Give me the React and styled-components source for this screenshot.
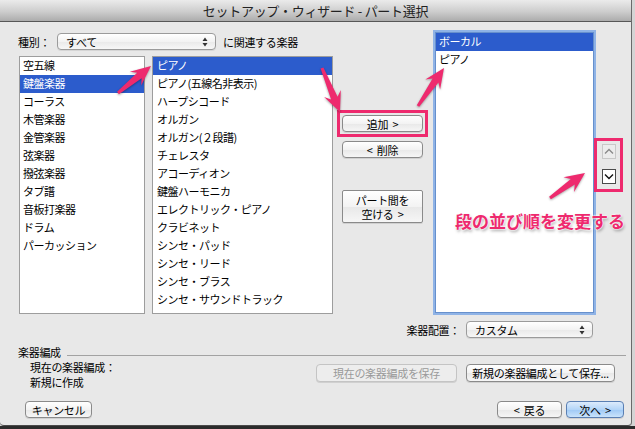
import React from 'react';
import styled, { createGlobalStyle } from 'styled-components';

const PINK = '#ee2a6e';
const FONT = '"Noto Sans CJK JP", "Noto Sans", sans-serif';

const GlobalStyle = createGlobalStyle`
  html, body {
    margin: 0;
    padding: 0;
    min-height: 100%;
    background: linear-gradient(to bottom, #d4d4d4 426px, #2b2b2b 426px);
  }
  body {
    font-family: ${FONT};
    font-size: 11px;
    color: #000;
  }
`;

const Window = styled.div`
  position: relative;
  width: 632px;
  height: 426px;
  box-sizing: border-box;
  background: #e8e8e8;
  border-right: 1px solid #6a6a6a;
  border-bottom: 1px solid #4a4a4a;
  border-radius: 0 0 4px 4px;
  display: flex;
  flex-direction: column;
  overflow: hidden;
`;

const TitleBar = styled.div`
  height: 22px;
  box-sizing: border-box;
  border-bottom: 1px solid #575757;
  background: linear-gradient(#ebebeb, #cdcdcd 55%, #acacac);
  display: flex;
  align-items: center;
  justify-content: center;
  font-size: 13px;
  color: #222;
  letter-spacing: -0.3px;
`;

const MainRow = styled.div`
  display: flex;
  align-items: flex-start;
  padding-top: 8px;
`;

const LeftSection = styled.div`
  margin-left: 18px;
  width: 315px;
  display: flex;
  flex-direction: column;
`;

const FilterRow = styled.div`
  display: flex;
  align-items: center;
  height: 17px;
  margin-top: 3px;
`;

const Label = styled.span`
  white-space: nowrap;
  letter-spacing: -0.3px;
  width: ${(p) => (p.width ? `${p.width}px` : 'auto')};
  margin-left: ${(p) => p.gap || 0}px;
`;

const Popup = styled.div`
  width: ${(p) => p.width}px;
  height: 17px;
  box-sizing: border-box;
  border: 1px solid #9b9b9b;
  border-radius: 4px;
  background: linear-gradient(#ffffff, #f3f3f3 50%, #e9e9e9 51%, #f7f7f7);
  box-shadow: 0 1px 0 rgba(0, 0, 0, 0.08);
  display: flex;
  align-items: center;
  justify-content: space-between;
  padding: 0 7px 0 8px;
  letter-spacing: -0.3px;
`;

const ListsRow = styled.div`
  display: flex;
  gap: 7px;
  margin: 6px 0 0 1px;
  height: 258px;
`;

const ListBox = styled.div`
  width: ${(p) => p.width}px;
  height: 100%;
  box-sizing: border-box;
  background: #fff;
  border: 1px solid #9d9d9d;
  overflow: hidden;
`;

const Row = styled.div`
  height: 18px;
  line-height: 17px;
  padding-left: ${(p) => p.indent || 3}px;
  white-space: nowrap;
  letter-spacing: -0.5px;
  background: ${(p) => (p.selected ? '#2c5ccc' : 'transparent')};
  color: ${(p) => (p.selected ? '#fff' : '#000')};
`;

const ButtonColumn = styled.div`
  margin-left: 9px;
  width: 81px;
  padding-top: 85px;
  display: flex;
  flex-direction: column;
`;

const Button = styled.button`
  width: ${(p) => (p.width ? `${p.width}px` : '100%')};
  height: ${(p) => p.height || 17}px;
  margin-top: ${(p) => p.top || 0}px;
  box-sizing: border-box;
  padding: 0;
  border: 1px solid ${(p) => (p.disabled ? '#c4c4c4' : p.primary ? '#5a7fb3' : '#8a8a8a')};
  border-radius: ${(p) => (p.square ? 2 : 4)}px;
  background: ${(p) =>
    p.disabled
      ? '#ededed'
      : p.primary
      ? 'linear-gradient(#dcebfc, #b3d5f8 50%, #9ec8f5 51%, #c9e3fb)'
      : 'linear-gradient(#ffffff, #f3f3f3 50%, #e8e8e8 51%, #f6f6f6)'};
  box-shadow: 0 1px 0 rgba(0, 0, 0, 0.1);
  font-family: ${FONT};
  font-size: 11px;
  line-height: 14px;
  letter-spacing: -0.3px;
  word-spacing: 2px;
  color: ${(p) => (p.disabled ? '#9a9a9a' : '#000')};
  white-space: pre-line;
`;

const Highlighted = styled.div`
  outline: 3px solid ${PINK};
  outline-offset: 2px;
`;

const RightList = styled.div`
  margin-left: 10px;
  width: 163px;
  height: 285px;
  box-sizing: border-box;
  background: #fff;
  border: 2px solid #8fb3e6;
  box-shadow: inset 0 0 0 1px #6790cc;
  padding: 1px;
  overflow: hidden;
`;

const OrderBox = styled.div`
  margin: 111px 0 0 1px;
  width: 23px;
  box-sizing: border-box;
  padding: 3px 4px 5px 5px;
  outline: 3px solid ${PINK};
  display: flex;
  flex-direction: column;
  gap: 10px;
`;

const OrderButton = styled.div`
  width: 14px;
  height: 15px;
  box-sizing: border-box;
  border: 1px solid ${(p) => (p.disabled ? '#c8c8c8' : '#4a4a4a')};
  background: ${(p) => (p.disabled ? '#ececec' : '#fff')};
  display: flex;
  align-items: center;
  justify-content: center;
`;

const PlacementRow = styled.div`
  display: flex;
  justify-content: flex-end;
  align-items: center;
  gap: 6px;
  margin-top: 6px;
  padding-right: 38px;
`;

const GroupHeader = styled.div`
  display: flex;
  align-items: center;
  height: 14px;
  margin-top: 7px;
  padding: 0 5px 0 18px;
`;

const GroupLine = styled.div`
  flex: 1;
  height: 1px;
  margin: 6px 0 0 6px;
  background: #a2a2a2;
`;

const GroupBody = styled.div`
  display: flex;
  align-items: flex-start;
  margin-top: 1px;
  padding: 0 16px 0 30px;
`;

const InfoLine = styled.div`
  height: 15px;
  line-height: 15px;
  letter-spacing: -0.3px;
  white-space: nowrap;
`;

const ButtonGroup = styled.div`
  display: flex;
  gap: ${(p) => p.gap || 9}px;
  margin-left: auto;
  margin-top: ${(p) => p.top || 0}px;
`;

const BottomRow = styled.div`
  display: flex;
  align-items: center;
  margin-top: 11px;
  padding: 0 7px 0 25px;
`;

const Overlay = styled.svg`
  position: absolute;
  left: 0;
  top: 0;
  pointer-events: none;
  filter: drop-shadow(0 1px 1px rgba(0, 0, 0, 0.35));
`;

const Note = styled.div`
  position: absolute;
  left: 455px;
  top: 208px;
  font-size: 17px;
  font-weight: 700;
  color: ${PINK};
  white-space: nowrap;
  text-shadow: 0 0 1px #fff, 0 0 2px #fff, 0 0 2px #fff, 1px 2px 3px rgba(0, 0, 0, 0.35);
`;

const categories = [
  '空五線', '鍵盤楽器', 'コーラス', '木管楽器', '金管楽器', '弦楽器',
  '撥弦楽器', 'タブ譜', '音板打楽器', 'ドラム', 'パーカッション',
];

const instruments = [
  'ピアノ', 'ピアノ(五線名非表示)', 'ハープシコード', 'オルガン', 'オルガン(２段譜)',
  'チェレスタ', 'アコーディオン', '鍵盤ハーモニカ', 'エレクトリック・ピアノ', 'クラビネット',
  'シンセ・パッド', 'シンセ・リード', 'シンセ・ブラス', 'シンセ・サウンドトラック', 'SFX',
];

const arrows = [
  [118, 93, 151, 66],
  [322, 68, 340, 112],
  [418, 106, 444, 68],
  [550, 198, 585, 173],
];

const arrowPoints = ([x1, y1, x2, y2]) => {
  const len = Math.hypot(x2 - x1, y2 - y1);
  const ux = (x2 - x1) / len;
  const uy = (y2 - y1) / len;
  const nx = -uy;
  const ny = ux;
  const headLen = 17;
  const bx = x2 - ux * headLen;
  const by = y2 - uy * headLen;
  const pt = (x, y, w) => `${(x + nx * w).toFixed(1)},${(y + ny * w).toFixed(1)}`;
  return [
    pt(x1, y1, 1.5),
    pt(bx + ux * 2, by + uy * 2, 3.5),
    pt(bx - ux * 3, by - uy * 3, 9),
    `${x2},${y2}`,
    pt(bx - ux * 3, by - uy * 3, -9),
    pt(bx + ux * 2, by + uy * 2, -3.5),
    pt(x1, y1, -1.5),
  ].join(' ');
};

const UpDown = () => (
  <svg width="6" height="10" viewBox="0 0 6 10">
    <path d="M3 0.5 L5.5 4 H0.5 Z M3 9.5 L5.5 6 H0.5 Z" fill="#333" />
  </svg>
);

const Chevron = ({ up, color }) => (
  <svg width="10" height="7" viewBox="0 0 10 7">
    <polyline
      points={up ? '1,5.5 5,1.5 9,5.5' : '1,1.5 5,5.5 9,1.5'}
      fill="none"
      stroke={color}
      strokeWidth="1.4"
    />
  </svg>
);

const App = () => {
  return (
    <>
      <GlobalStyle />
      <Window>
        <TitleBar>セットアップ・ウィザード - パート選択</TitleBar>
        <MainRow>
          <LeftSection>
            <FilterRow>
              <Label width={39}>種別：</Label>
              <Popup width={159}>
                <span>すべて</span>
                <UpDown />
              </Popup>
              <Label gap={7}>に関連する楽器</Label>
            </FilterRow>
            <ListsRow>
              <ListBox width={126}>
                {categories.map((name) => (
                  <Row key={name} selected={name === '鍵盤楽器'}>
                    {name}
                  </Row>
                ))}
              </ListBox>
              <ListBox width={181}>
                {instruments.map((name, i) => (
                  <Row key={name} indent={4} selected={i === 0}>
                    {name}
                  </Row>
                ))}
              </ListBox>
            </ListsRow>
          </LeftSection>
          <ButtonColumn>
            <Highlighted>
              <Button>追加 &gt;</Button>
            </Highlighted>
            <Button top={9}>&lt; 削除</Button>
            <Button top={32} height={33} square>
              {'パート間を\n空ける >'}
            </Button>
          </ButtonColumn>
          <RightList>
            <Row selected>ボーカル</Row>
            <Row>ピアノ</Row>
          </RightList>
          <OrderBox>
            <OrderButton disabled>
              <Chevron up color="#8a8a8a" />
            </OrderButton>
            <OrderButton>
              <Chevron color="#111" />
            </OrderButton>
          </OrderBox>
        </MainRow>
        <PlacementRow>
          <Label>楽器配置：</Label>
          <Popup width={127}>
            <span>カスタム</span>
            <UpDown />
          </Popup>
        </PlacementRow>
        <GroupHeader>
          <Label>楽器編成</Label>
          <GroupLine />
        </GroupHeader>
        <GroupBody>
          <div>
            <InfoLine>現在の楽器編成：</InfoLine>
            <InfoLine>新規に作成</InfoLine>
          </div>
          <ButtonGroup top={4}>
            <Button width={141} height={18} disabled>
              現在の楽器編成を保存
            </Button>
            <Button width={149} height={18}>
              新規の楽器編成として保存...
            </Button>
          </ButtonGroup>
        </GroupBody>
        <BottomRow>
          <Button width={67}>キャンセル</Button>
          <ButtonGroup gap={4}>
            <Button width={65}>&lt; 戻る</Button>
            <Button width={58} primary>
              次へ &gt;
            </Button>
          </ButtonGroup>
        </BottomRow>

        <Overlay width="632" height="426">
          {arrows.map((a, i) => (
            <polygon key={i} points={arrowPoints(a)} fill={PINK} strokeLinejoin="round" />
          ))}
        </Overlay>
        <Note>段の並び順を変更する</Note>
      </Window>
    </>
  );
};

export default App;
